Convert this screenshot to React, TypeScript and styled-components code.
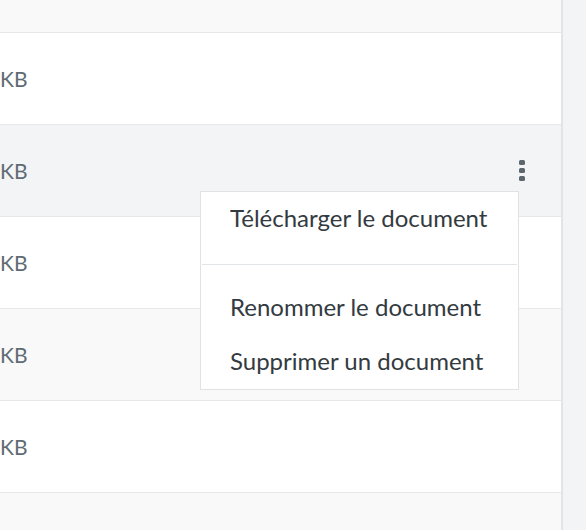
import React from "react";
import styled, { createGlobalStyle } from "styled-components";

const GlobalStyle = createGlobalStyle`
    html, body {
        margin: 0;
        padding: 0;
        background: #ffffff;
        font-family: "Source Sans Pro", Lato, "Liberation Sans", sans-serif;
    }
`;

interface IFileRow {
    size: string;
    striped: boolean;
    hover?: boolean;
}

const rows: IFileRow[] = [
    { size: "KB", striped: false },
    { size: "KB", striped: true, hover: true },
    { size: "KB", striped: false },
    { size: "KB", striped: true },
    { size: "KB", striped: false },
];

const App = () => {
    return (
        <>
            <GlobalStyle />
            <Page>
                <TableArea>
                    <Row $striped={true} $height={32} />
                    {rows.map((row, i) => (
                        <Row key={i} $striped={row.striped} $hover={row.hover} $height={91}>
                            <SizeCell>{row.size}</SizeCell>
                            {row.hover && (
                                <ActionCell>
                                    <KebabButton aria-label="Actions">
                                        <Dot />
                                        <Dot />
                                        <Dot />
                                    </KebabButton>
                                    <Menu>
                                        <MenuItem>Télécharger le document</MenuItem>
                                        <MenuDivider />
                                        <MenuItem $first>Renommer le document</MenuItem>
                                        <MenuItem>Supprimer un document</MenuItem>
                                    </Menu>
                                </ActionCell>
                            )}
                        </Row>
                    ))}
                    <Row $striped={true} $height={40} />
                </TableArea>
                <SidePanel />
            </Page>
        </>
    );
}

const Page = styled.div`
    display: flex;
    width: 586px;
    height: 530px;
    overflow: hidden;
`;

const TableArea = styled.div`
    display: flex;
    flex-direction: column;
    width: 561px;
    flex-shrink: 0;
`;

const SidePanel = styled.div`
    flex: 1;
    background-color: #f3f4f6;
    border-left: 2px solid #e2e5e8;
`;

const Row = styled.div<{ $striped: boolean; $hover?: boolean; $height: number }>`
    position: relative;
    display: flex;
    align-items: center;
    justify-content: space-between;
    flex-shrink: 0;
    height: ${props => props.$height}px;
    background-color: ${props => props.$hover ? "#f3f4f6" : props.$striped ? "#f9f9f9" : "#ffffff"};
    border-bottom: 1px solid #e6e8ea;

    &:last-child {
        border-bottom: none;
    }
`;

const SizeCell = styled.span`
    font-size: 21px;
    color: #5f6b74;
`;

const ActionCell = styled.div`
    position: relative;
    margin-right: 36px;
`;

const KebabButton = styled.button`
    display: flex;
    flex-direction: column;
    gap: 3px;
    padding: 0;
    border: none;
    background: transparent;
    cursor: pointer;
`;

const Dot = styled.span`
    display: block;
    width: 6px;
    height: 5px;
    border-radius: 1.5px;
    background-color: #5c6770;
`;

const Menu = styled.div`
    position: absolute;
    top: 31px;
    right: 6px;
    z-index: 10;
    width: 317px;
    background-color: #ffffff;
    border: 1px solid #dfe3e6;
`;

const MenuItem = styled.div<{ $first?: boolean }>`
    box-sizing: border-box;
    padding: 0 29px 3px;
    height: 54px;
    display: flex;
    align-items: center;
    font-size: 24px;
    color: #333a40;
    white-space: nowrap;
    margin-top: ${props => props.$first ? "16px" : "0"};
    cursor: pointer;
`;

const MenuDivider = styled.div`
    margin: 18px 1px 0;
    border-top: 1px solid #e3e6e8;
`;

export default App;
